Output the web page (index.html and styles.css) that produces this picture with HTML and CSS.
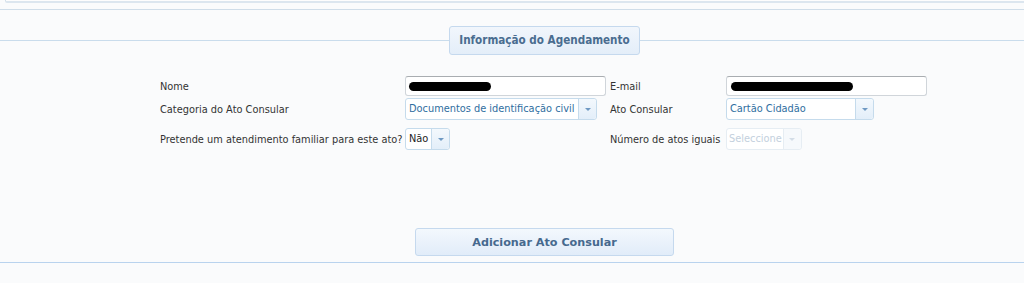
FILE: index.html
```html
<!DOCTYPE html>
<html lang="pt">
<head>
  <meta charset="UTF-8">
  <title>Agendamento Consular</title>
  <link rel="stylesheet" href="styles.css">
</head>
<body>
  <div class="top-panel"></div>
  <div class="top-rule"></div>

  <section class="booking">
    <div class="legend-row">
      <div class="legend">Informação do Agendamento</div>
    </div>

    <div class="form-grid">
      <label class="lbl row1">Nome</label>
      <div class="text-input row1"><span class="redacted name"></span></div>
      <label class="lbl row1">E-mail</label>
      <div class="text-input row1"><span class="redacted email"></span></div>

      <label class="lbl row2">Categoria do Ato Consular</label>
      <div class="combo combo-cat row2">
        <span class="combo-value">Documentos de identificação civil</span>
        <span class="combo-btn"><span class="arrow"></span></span>
      </div>
      <label class="lbl row2">Ato Consular</label>
      <div class="combo combo-ato row2">
        <span class="combo-value">Cartão Cidadão</span>
        <span class="combo-btn"><span class="arrow"></span></span>
      </div>

      <label class="lbl row3">Pretende um atendimento familiar para este ato?</label>
      <div class="combo combo-fam row3">
        <span class="combo-value dark">Não</span>
        <span class="combo-btn"><span class="arrow"></span></span>
      </div>
      <label class="lbl row3">Número de atos iguais</label>
      <div class="combo combo-num disabled row3">
        <span class="combo-value">Seleccione</span>
        <span class="combo-btn"><span class="arrow"></span></span>
      </div>
    </div>

    <div class="actions">
      <button class="add-btn" type="button">Adicionar Ato Consular</button>
    </div>
  </section>
  <div class="bottom-rule"></div>
</body>
</html>
```

FILE: styles.css
```css
body {
  margin: 0;
  background: #fafbfc;
  font-family: 'DejaVu Sans', Verdana, sans-serif;
  font-size: 9.8px;
  color: #333;
  height: 283px;
  overflow: hidden;
}
.top-panel {
  margin-left: 5px;
  height: 1px;
  border-left: 1px solid #d3e0ea;
  border-bottom: 2px solid #dce6ef;
  border-bottom-left-radius: 2px;
  background: #fdfdfd;
}
.top-rule {
  margin-top: 6px;
  border-top: 1px solid #cfdde9;
}
.booking {
  padding-top: 16px;
}
.legend-row {
  display: flex;
  justify-content: center;
  padding-left: 65px;
  background: linear-gradient(#c9dcec, #c9dcec) 0 14px / 100% 1px no-repeat;
}
.legend {
  width: 189px;
  height: 27px;
  line-height: 27px;
  text-align: center;
  border: 1px solid #c5d9ee;
  border-radius: 3px;
  background: linear-gradient(#f1f6fc, #e4eef9);
  color: #4a6d90;
  font-family: 'DejaVu Sans Condensed', 'DejaVu Sans', sans-serif;
  font-weight: bold;
  font-size: 11.6px;
}

/* form */
.form-grid {
  display: grid;
  grid-template-columns: 245px 205px 116px 201px;
  margin: 21px 0 0 160px;
}
.lbl {
  display: flex;
  align-items: center;
  white-space: nowrap;
}
.row2 { margin-top: 2px; }
.row3 { margin-top: 8px; }
.text-input {
  width: 199px;
  height: 18px;
  border: 1px solid #d0d5da;
  border-top-color: #a9adb1;
  border-radius: 3px;
  background: #fff;
  display: flex;
  align-items: center;
}
.redacted {
  display: block;
  height: 9px;
  background: #000;
  border-radius: 5px;
}
.redacted.name { width: 82px; margin-left: 3px; }
.redacted.email { width: 122px; margin-left: 4px; }

.combo {
  display: flex;
  height: 20px;
  border: 1px solid #c5dbec;
  border-radius: 3px;
  background: #fff;
  justify-self: start;
}
.combo-value {
  padding: 0 1px 0 3px;
  line-height: 20px;
  color: #2f6ea0;
  white-space: nowrap;
  border-right: 1px solid #c5dbec;
  font-size: 9.8px;
}
.combo-value.dark { color: #222; }
.combo-btn {
  width: 17px;
  background: linear-gradient(#f3f8fd, #e3eef9);
  border-radius: 0 3px 3px 0;
  display: flex;
  align-items: center;
  justify-content: center;
}
.arrow {
  width: 0;
  height: 0;
  border-left: 3px solid transparent;
  border-right: 3px solid transparent;
  border-top: 3px solid #6f99c3;
}
.combo-cat .combo-value { min-width: 168px; }
.combo-ato .combo-value { width: 124px; }
.combo-fam .combo-value { min-width: 21px; }
.combo-num .combo-value { min-width: 51px; padding-left: 2px; }
.combo.disabled { border-color: #e6edf3; }
.combo.disabled .combo-value { color: #c3d0dd; border-right-color: #e6edf3; }
.combo.disabled .combo-btn { background: #f6f9fc; }
.combo.disabled .arrow { border-top-color: #d3dde7; }

.actions {
  display: flex;
  justify-content: center;
  padding-left: 65px;
  margin-top: 78px;
}
.add-btn {
  width: 259px;
  height: 28px;
  border: 1px solid #c5d9ee;
  border-radius: 3px;
  background: linear-gradient(#f3f8fd, #e1ecf9);
  color: #46698e;
  font-family: 'DejaVu Sans', Verdana, sans-serif;
  font-weight: bold;
  font-size: 11.2px;
  padding: 0;
}
.bottom-rule {
  margin-top: 6px;
  border-top: 1px solid #b9d3ee;
}
```
